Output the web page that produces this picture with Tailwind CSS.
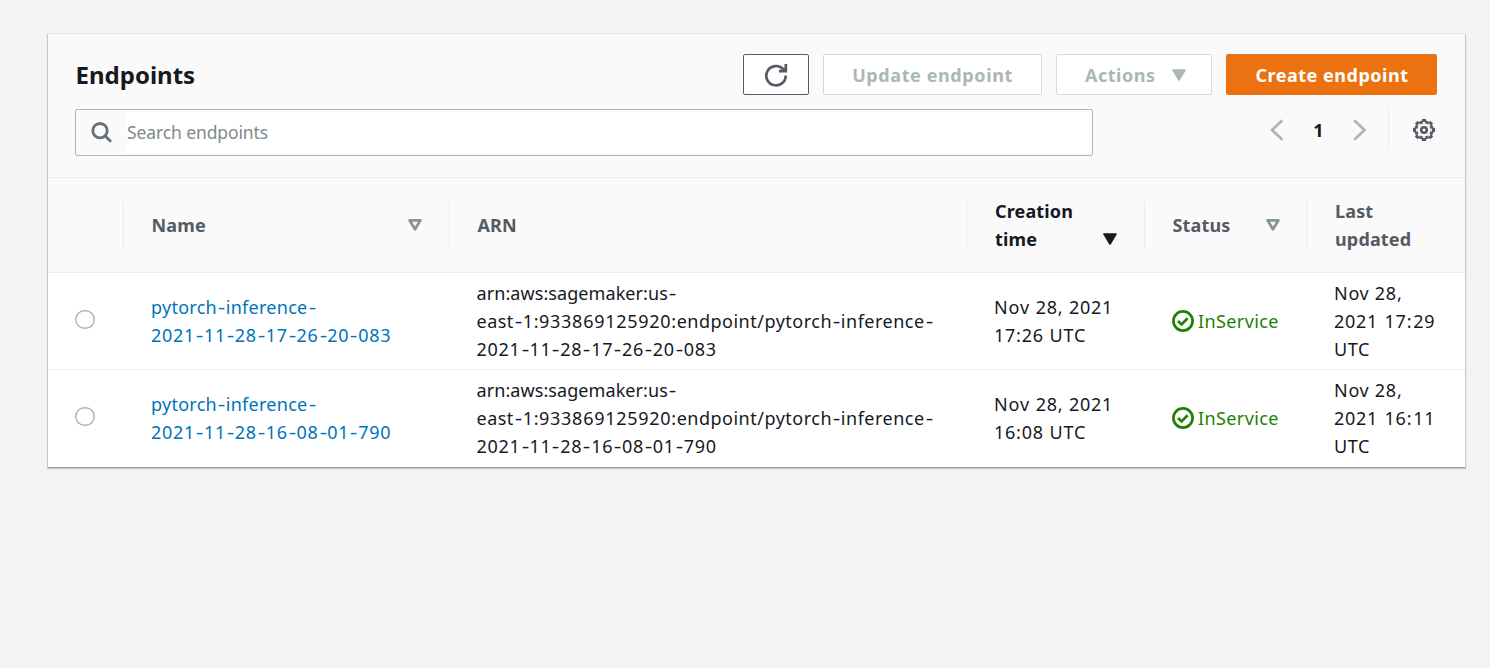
<!DOCTYPE html>
<html lang="en">
<head>
<meta charset="utf-8">
<title>Endpoints</title>
<script src="https://cdn.jsdelivr.net/npm/@tailwindcss/browser@4"></script>
</head>
<body class="min-h-screen bg-[#f2f4f3] pt-[34px] pl-12 font-['Noto_Sans',sans-serif] text-[18px] leading-7 text-[#16191f]">
<main class="w-[1417px] bg-white shadow-[0_1px_1px_0_rgba(0,28,36,0.3),0_1px_1px_1px_rgba(0,28,36,0.15),0_-1px_0_0_#eaeded]">
  <header class="h-36 border-b border-[#eaeded] bg-[#fafafa] pt-5 pr-7 pl-[27px]">
    <div class="flex h-[41px] items-center gap-3.5">
      <h1 class="mr-auto pl-[0.5px] text-[24px] font-bold"><span>Endpoints</span></h1>
      <button class="flex h-[41px] w-[66px] items-center justify-center rounded-[2px] border border-[#545b64] bg-white" aria-label="Refresh">
        <svg class="size-[24px]" viewBox="0 0 24 24" fill="none" stroke="#545b64" stroke-width="2.7"><path d="M21.7 12.6A9.7 9.7 0 1 1 19.2 6.2L21.3 8.4M21.8 1V8.2H15"/></svg>
      </button>
      <button class="h-[41px] w-[219px] rounded-[2px] border border-[#d5dbdb] bg-white font-bold tracking-[0.6px] text-[#aab7b8]"><span>Update endpoint</span></button>
      <button class="flex h-[41px] w-[156px] items-center justify-between rounded-[2px] border border-[#d5dbdb] bg-white pr-[25px] pl-7 font-bold tracking-[0.5px] text-[#aab7b8]"><span>Actions</span>
        <svg class="h-3 w-[14px]" viewBox="0 0 14 12"><path d="M1 1H13L7 11Z" fill="#aab7b8" stroke="#aab7b8" stroke-width="1.6" stroke-linejoin="round"/></svg>
      </button>
      <button class="h-[41px] w-[211px] rounded-[2px] bg-[#ec7211] pl-px font-bold tracking-[0.52px] text-white"><span>Create endpoint</span></button>
    </div>
    <div class="mt-3.5 flex">
      <div class="flex h-[47px] w-[1018px] rounded-[2px] border border-[#aab7b8] bg-[#fafafa] py-0.5">
        <div class="flex w-[51px] items-center pl-[15px]">
          <svg class="size-[21px]" viewBox="0 0 21 21" fill="none" stroke="#687078" stroke-width="2.8"><circle cx="9" cy="8.7" r="7.2"/><path d="M14 13.7L20 19.7"/></svg>
        </div>
        <div class="flex-1 bg-white text-[17.5px] leading-[41px] tracking-[-0.11px] text-[#81898c]"><span>Search endpoints</span></div>
      </div>
      <nav class="ml-auto flex h-[41px] items-center">
        <svg class="h-[22px] w-[14px]" viewBox="0 0 14 22" fill="none" stroke="#aab7b8" stroke-width="2.7"><path d="M12.3 1.2L2 11L12.3 20.8"/></svg>
        <span class="w-[69px] text-center font-bold">1</span>
        <svg class="h-[22px] w-[14px]" viewBox="0 0 14 22" fill="none" stroke="#aab7b8" stroke-width="2.7"><path d="M1.2 1.2L11.5 11L1.2 20.8"/></svg>
        <span class="ml-[21px] h-[41px] w-px bg-[#eaeded]"></span>
        <svg class="mr-px ml-6 size-[23px]" viewBox="0 0 23 23" fill="none" stroke="#545b64"><g transform="translate(-.5 .5)"><g transform="rotate(-11.25 11.5 11.5)"><circle cx="11.5" cy="11.5" r="8.2" stroke-width="3"/><circle cx="11.5" cy="11.5" r="10" stroke-width="2.2" pathLength="80" stroke-dasharray="5 5"/><circle cx="11.5" cy="11.5" r="7.3" stroke="#fafafa" stroke-width="1.4" pathLength="80" stroke-dasharray="5 5"/></g><circle cx="11.5" cy="11.5" r="2.8" stroke-width="2.6"/></g></svg>
      </nav>
    </div>
  </header>
  <div class="grid h-[95px] grid-cols-[76px_326px_517px_178px_162px_158px] items-center border-b border-[#eaeded] bg-[#fafafa] font-bold tracking-[0.15px] text-[#545b64]">
    <div class="mb-px h-[48px] border-r border-[#eaeded]"></div>
    <div class="mb-px flex h-[48px] items-center justify-between border-r border-[#eaeded] pr-[27px] pl-[27.5px]"><span>Name</span>
      <svg class="h-3 w-[14px]" viewBox="0 0 14 12"><path d="M1.6 1.3H12.4L7 10.3Z" fill="none" stroke="#879596" stroke-width="2.7" stroke-linejoin="round"/></svg>
    </div>
    <div class="mb-px flex h-[48px] items-center border-r border-[#eaeded] pl-[27.5px]"><span>ARN</span></div>
    <div class="mb-px flex h-[48px] items-center justify-between border-r border-[#eaeded] pr-[27px] pl-7 text-[#16191f]"><span>Creation<br>time</span>
      <svg class="mt-[28px] h-3 w-[14px]" viewBox="0 0 14 12"><path d="M1 1H13L7 11Z" fill="#16191f" stroke="#16191f" stroke-width="1.6" stroke-linejoin="round"/></svg>
    </div>
    <div class="mb-px flex h-[48px] items-center justify-between border-r border-[#eaeded] pr-[26px] pl-[27.5px]"><span>Status</span>
      <svg class="h-3 w-[14px]" viewBox="0 0 14 12"><path d="M1.6 1.3H12.4L7 10.3Z" fill="none" stroke="#879596" stroke-width="2.7" stroke-linejoin="round"/></svg>
    </div>
    <div class="mb-px pl-7"><span>Last<br>updated</span></div>
  </div>
  <div class="grid h-[97px] grid-cols-[76px_326px_517px_178px_162px_158px] items-center border-b border-[#eaeded]" data-row>
    <div class="pb-[3px] pl-[27px]"><span class="block size-[19.5px] rounded-full bg-white shadow-[inset_0_0_0_1.5px_#aab7b8]"></span></div>
    <a class="pl-[27px] tracking-[0.27px] text-[#0073bb]"><span>pytorch-inference-</span><br><span>2021-11-28-17-26-20-083</span></a>
    <div class="pl-[26.5px]"><span class="tracking-[0.08px]">arn:aws:sagemaker:us-</span><br><span class="tracking-[0.5px]">east-1:933869125920:endpoint/pytorch-inference-</span><br><span>2021-11-28-17-26-20-083</span></div>
    <div class="pl-[27px] tracking-[0.9px]"><span>Nov 28, 2021</span><br><span>17:26 UTC</span></div>
    <div class="flex items-center gap-1 pl-[27px] tracking-[0.4px] text-[#1d8102]">
      <svg class="size-[22px]" viewBox="0 0 22 22" fill="none" stroke="#1d8102" stroke-width="2.7"><circle cx="11" cy="11" r="9.6"/><path d="M6 11L9.6 14.4L15.6 8.2"/></svg>
      <span>InService</span>
    </div>
    <div class="pl-[27px] tracking-[0.7px]"><span>Nov 28,</span><br><span class="tracking-[1.8px]">2021 17:29</span><br><span class="tracking-[0.6px]">UTC</span></div>
  </div>
  <div class="grid h-[97px] grid-cols-[76px_326px_517px_178px_162px_158px] items-center pb-px" data-row>
    <div class="pb-[3px] pl-[27px]"><span class="block size-[19.5px] rounded-full bg-white shadow-[inset_0_0_0_1.5px_#aab7b8]"></span></div>
    <a class="pl-[27px] tracking-[0.27px] text-[#0073bb]"><span>pytorch-inference-</span><br><span>2021-11-28-16-08-01-790</span></a>
    <div class="pl-[26.5px]"><span class="tracking-[0.08px]">arn:aws:sagemaker:us-</span><br><span class="tracking-[0.5px]">east-1:933869125920:endpoint/pytorch-inference-</span><br><span>2021-11-28-16-08-01-790</span></div>
    <div class="pl-[27px] tracking-[0.9px]"><span>Nov 28, 2021</span><br><span>16:08 UTC</span></div>
    <div class="flex items-center gap-1 pl-[27px] tracking-[0.4px] text-[#1d8102]">
      <svg class="size-[22px]" viewBox="0 0 22 22" fill="none" stroke="#1d8102" stroke-width="2.7"><circle cx="11" cy="11" r="9.6"/><path d="M6 11L9.6 14.4L15.6 8.2"/></svg>
      <span>InService</span>
    </div>
    <div class="pl-[27px] tracking-[0.7px]"><span>Nov 28,</span><br><span class="tracking-[1.8px]">2021 16:11</span><br><span class="tracking-[0.6px]">UTC</span></div>
  </div>
</main>
<script>
  document.querySelectorAll('[data-row] span').forEach((s) => {
    s.innerHTML = s.textContent
      .replace(/\d+/g, (d) => `<i class="not-italic tracking-[0.73px]">${d}</i>`)
      .replace(/-(?![^<]*>)/g, '<b class="inline-block w-[8.8px] scale-x-[1.3] text-center font-normal tracking-normal">-</b>');
  });
</script>
</body>
</html>
